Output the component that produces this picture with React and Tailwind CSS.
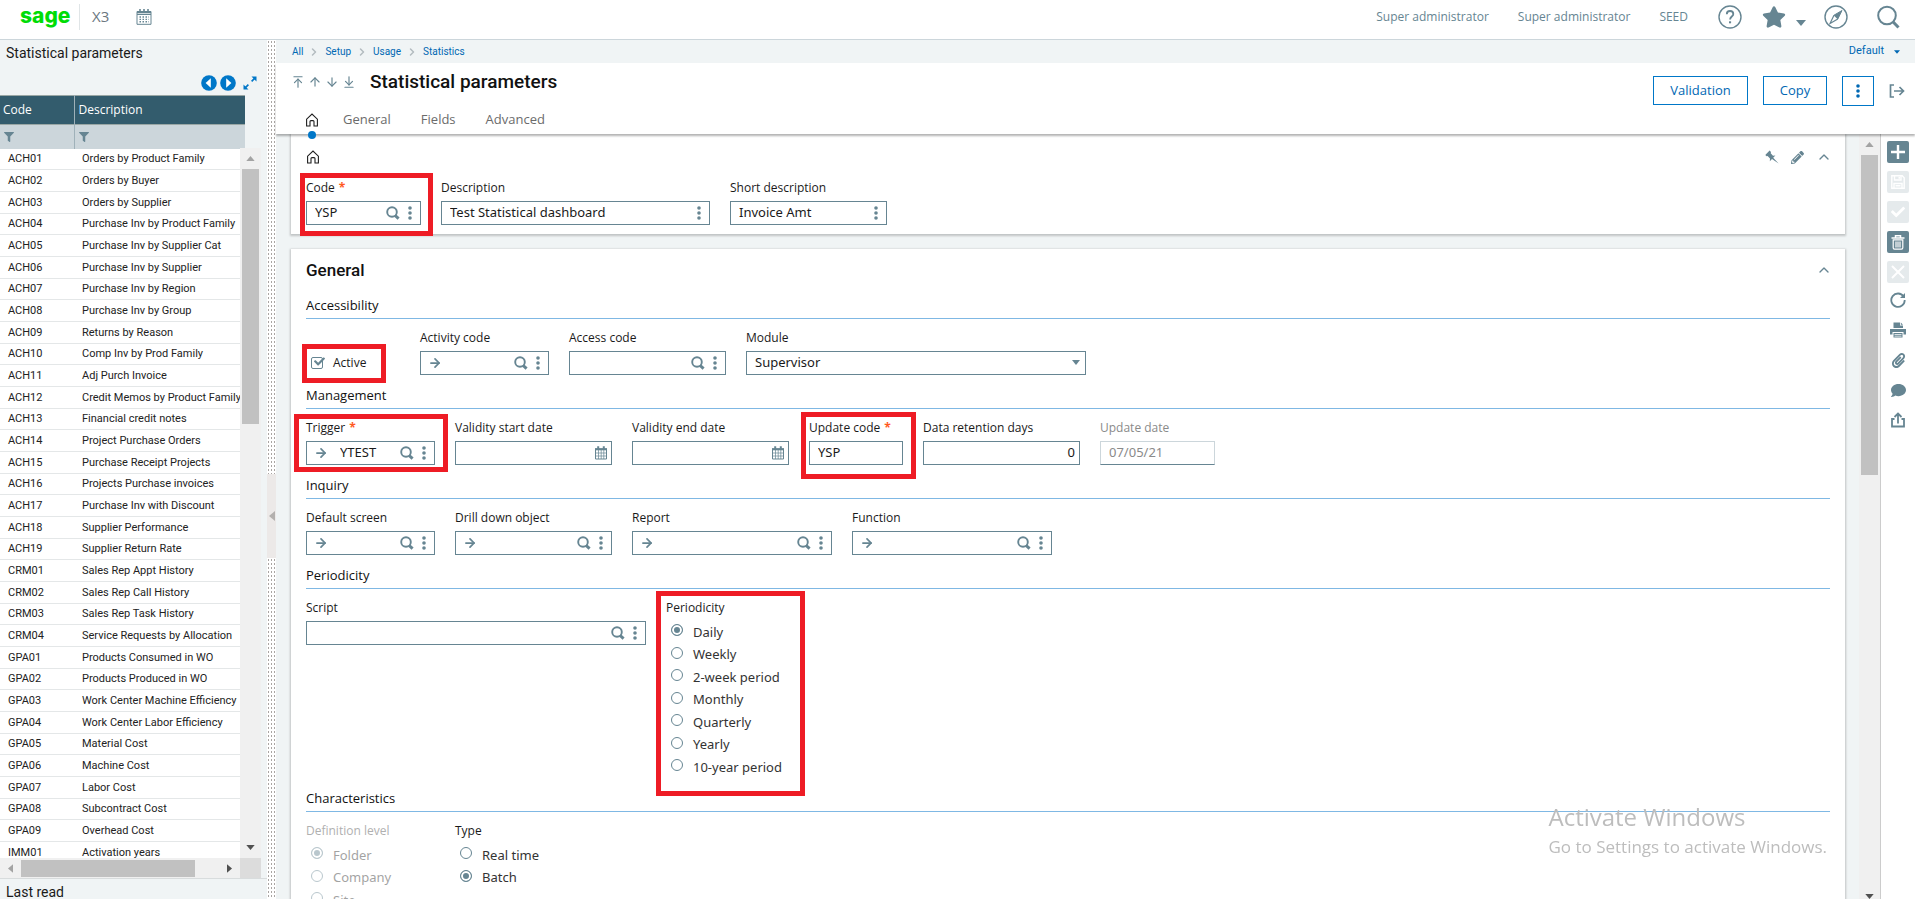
import { useId } from "react";
import { ArrowDown, ArrowDownToLine, ArrowRight, ArrowUp, ArrowUpToLine, ChevronRight, ChevronUp } from "lucide-react";
import { FaCheck, FaComment, FaFilter, FaPaperclip, FaPencilAlt, FaStar } from "react-icons/fa";

const statistics = [
  ["ACH01", "Orders by Product Family"],
  ["ACH02", "Orders by Buyer"],
  ["ACH03", "Orders by Supplier"],
  ["ACH04", "Purchase Inv by Product Family"],
  ["ACH05", "Purchase Inv by Supplier Cat"],
  ["ACH06", "Purchase Inv by Supplier"],
  ["ACH07", "Purchase Inv by Region"],
  ["ACH08", "Purchase Inv by Group"],
  ["ACH09", "Returns by Reason"],
  ["ACH10", "Comp Inv by Prod Family"],
  ["ACH11", "Adj Purch Invoice"],
  ["ACH12", "Credit Memos by Product Family"],
  ["ACH13", "Financial credit notes"],
  ["ACH14", "Project Purchase Orders"],
  ["ACH15", "Purchase Receipt Projects"],
  ["ACH16", "Projects Purchase invoices"],
  ["ACH17", "Purchase Inv with Discount"],
  ["ACH18", "Supplier Performance"],
  ["ACH19", "Supplier Return Rate"],
  ["CRM01", "Sales Rep Appt History"],
  ["CRM02", "Sales Rep Call History"],
  ["CRM03", "Sales Rep Task History"],
  ["CRM04", "Service Requests by Allocation"],
  ["GPA01", "Products Consumed in WO"],
  ["GPA02", "Products Produced in WO"],
  ["GPA03", "Work Center Machine Efficiency"],
  ["GPA04", "Work Center Labor Efficiency"],
  ["GPA05", "Material Cost"],
  ["GPA06", "Machine Cost"],
  ["GPA07", "Labor Cost"],
  ["GPA08", "Subcontract Cost"],
  ["GPA09", "Overhead Cost"],
  ["IMM01", "Activation years"],
];

const periods = ["Daily", "Weekly", "2-week period", "Monthly", "Quarterly", "Yearly", "10-year period"];

/* ---------- icons ---------- */

function SearchIcon() {
  return (
    <svg viewBox="0 0 14 14" className="size-[14px]" fill="none" stroke="currentColor" aria-hidden="true">
      <circle cx="6" cy="6" r="4.8" strokeWidth="1.9" />
      <path d="M9 9.4 12.6 12.6" strokeWidth="3" />
    </svg>
  );
}

function DotsIcon() {
  return (
    <svg viewBox="0 0 4 14" className="h-[14px] w-1" fill="currentColor" aria-hidden="true">
      <circle cx="2" cy="2" r="1.8" />
      <circle cx="2" cy="7" r="1.8" />
      <circle cx="2" cy="12" r="1.8" />
    </svg>
  );
}

function CalendarIcon() {
  return (
    <svg viewBox="0 0 14 14" className="size-[14px]" fill="none" stroke="currentColor" aria-hidden="true">
      <path d="M1.5 3v10h11V3" />
      <path d="M1 3.2h12" strokeWidth="2.2" />
      <path d="M4.2.3v3M9.8.3v3" strokeWidth="2" />
      <path d="M1.5 7h11M1.5 10h11M4.5 4v9M7.2 4v9M9.8 4v9" strokeWidth="0.7" />
    </svg>
  );
}

function AgendaIcon() {
  return (
    <svg viewBox="0 0 16 16" className="size-4" fill="none" stroke="currentColor" aria-hidden="true">
      <path d="M1 2.5h14v12.8H1zM1 5.5h14" />
      <path d="M1 3.5h14" strokeWidth="1.6" />
      <path d="M4 0v3.5M8 0v3.5M12 0v3.5" strokeWidth="1.6" />
      <path d="M3.5 8h9.5M3.5 10.4h9.5M3.5 12.8h9.5" strokeWidth="1.4" strokeDasharray="1.5 1.5" />
    </svg>
  );
}

function HomeIcon() {
  return (
    <svg viewBox="0 0 14 14" className="size-[14px] text-[#1f1f1f]" fill="none" stroke="currentColor" strokeWidth="1.1" aria-hidden="true">
      <path d="M1.6 13V6.2L7 1l5.4 5.2V13H9V8.6c0-.6-.4-1-1-1H6c-.6 0-1 .4-1 1V13z" />
    </svg>
  );
}

function StepIcon({ left }) {
  return (
    <svg viewBox="0 0 16 16" className={left ? "size-4 rotate-180" : "size-4"} aria-hidden="true">
      <circle cx="8" cy="8" r="7.8" fill="#0077c8" />
      <path d="M6.2 3.2v9.6L11.4 8z" fill="#fff" />
    </svg>
  );
}

function ExpandIcon() {
  return (
    <svg viewBox="0 0 14 14" className="size-[14px]" fill="#0077c8" stroke="#0077c8" aria-hidden="true">
      <path d="M8.5.5h5v5zM.5 8.5v5h5z" stroke="none" />
      <path d="m8.6 5.4 3-3M5.4 8.6l-3 3" strokeWidth="1.6" />
    </svg>
  );
}

function PinIcon() {
  return (
    <svg viewBox="0 0 14 14" className="size-[14px]" fill="currentColor" aria-hidden="true">
      <path d="M4.600.6 6 2 5.700 3.200 8 5.800l2.400-.2-2.200 2.200 5.400 5.800L7 9 4.800 11.200 5 8.600 2.600 6 1.600 6.300.3 5z" />
    </svg>
  );
}

function CompassIcon() {
  return (
    <svg viewBox="0 0 24 24" className="size-6" fill="none" stroke="currentColor" aria-hidden="true">
      <circle cx="12" cy="12" r="11" strokeWidth="1.4" />
      <path d="M18 5.5 13.8 14 10 10.2z" fill="currentColor" />
      <path d="m10 10.2-4 8.3 7.8-4.5" strokeWidth="1.2" />
    </svg>
  );
}

function HelpIcon() {
  return (
    <svg viewBox="0 0 24 24" className="size-6" fill="none" stroke="currentColor" aria-hidden="true">
      <circle cx="12" cy="12" r="11" strokeWidth="1.4" />
      <path d="M8.8 9.2C8.8 7.2 10.1 6 12 6s3.3 1.1 3.3 2.9c0 2.6-3.2 2.7-3.2 5.5" strokeWidth="1.8" />
      <path d="M11 16.3h2.1v2H11z" fill="currentColor" stroke="none" />
    </svg>
  );
}

function Triangle({ className }) {
  return (
    <svg viewBox="0 0 10 6" className={className} fill="currentColor" aria-hidden="true">
      <path d="M0 0h10L5 6z" />
    </svg>
  );
}

/* ---------- form controls ---------- */

// red frame drawn over the fields to fill in
function Highlight({ className }) {
  return <div className={`pointer-events-none absolute z-10 border-5 border-[#ee1c25] ${className}`} />;
}

function Label({ htmlFor, required, muted, children }) {
  return (
    <label htmlFor={htmlFor} className={`text-xs whitespace-nowrap ${muted ? "text-[#8a8a8a]" : "text-[#1a1a1a]"}`}>
      {children}
      {required && <span className="ml-1 font-bold text-[#ff5a1f]">*</span>}
    </label>
  );
}

function Field({ label, value = "", width, required, muted, link, search, more, calendar, right, highlight }) {
  const id = useId();
  return (
    <div className={`relative flex shrink-0 flex-col gap-[5px] ${width}`}>
      <Label htmlFor={id} required={required} muted={muted}>{label}</Label>
      <div className={`flex h-6 items-center gap-2 border bg-white px-2 text-[#668592] ${muted ? "border-[#ccd6db] border-b-[#668592]" : "border-[#668592]"}`}>
        {link && (
          <button type="button" aria-label={`Open ${label}`} className="mr-1 -ml-px">
            <ArrowRight size={14} strokeWidth={3} />
          </button>
        )}
        <input
          id={id}
          defaultValue={value}
          disabled={muted}
          className={`w-0 min-w-0 flex-1 bg-transparent font-['Noto_Sans',sans-serif] text-[13px] outline-none ${muted ? "text-[#8a8a8a]" : "text-[#1a1a1a]"} ${right ? "-mr-1 text-right" : ""}`}
        />
        {search && (
          <button type="button" aria-label={`Search ${label}`}>
            <SearchIcon />
          </button>
        )}
        {more && (
          <button type="button" aria-label={`${label} actions`}>
            <DotsIcon />
          </button>
        )}
        {calendar && (
          <button type="button" aria-label={`Pick ${label}`} className="-mr-[5px]">
            <CalendarIcon />
          </button>
        )}
      </div>
      {highlight && <Highlight className={highlight} />}
    </div>
  );
}

function RadioGroup({ label, name, options, selected, width, muted, highlight }) {
  return (
    <fieldset className={`relative shrink-0 ${width}`}>
      <legend className={`block text-xs ${muted ? "text-[#b0b0b0]" : "text-[#1a1a1a]"}`}>{label}</legend>
      <div className={`pt-1 pl-[5px] ${muted ? "opacity-45" : ""}`}>
        {options.map((option) => (
          <label key={option} className="flex h-[23px] items-center gap-[10px] font-['Noto_Sans',sans-serif] text-[13px] text-[#333] even:h-[22px]">
            <input
              type="radio"
              name={name}
              defaultChecked={option === selected}
              disabled={muted}
              className="mb-[3px] size-3 shrink-0 appearance-none rounded-full border border-[#668592] bg-white checked:bg-[#668592] checked:shadow-[inset_0_0_0_2px_#fff]"
            />
            <span className="pt-[2px]">{option}</span>
          </label>
        ))}
      </div>
      {highlight && <Highlight className={highlight} />}
    </fieldset>
  );
}

function Section({ title, children }) {
  return (
    <section>
      <h3 className="border-b border-[#7fb8e4] pt-[10px] pb-[3px] text-[13px] leading-5 font-medium text-[#111]">{title}</h3>
      <div className="flex gap-5 pt-[11px]">{children}</div>
    </section>
  );
}

/* ---------- page parts ---------- */

function TopBar() {
  return (
    <header className="flex h-10 shrink-0 items-center border-b border-[#ccd6db] bg-white pr-[15px] pb-[6px] pl-5 text-[#668592]">
      <a href="#home" className="w-[60px] border-r border-[#e0e5e7] pb-[2px] font-['Inter',sans-serif] text-[21px] leading-6 font-extrabold text-[#00dc06]">sage</a>
      <span className="ml-3 text-[15px] text-[#6b7780]">X3</span>
      <button type="button" aria-label="Calendar" className="ml-[27px]"><AgendaIcon /></button>
      <div className="ml-auto flex items-center gap-[29px] text-xs">
        <span>Super administrator</span>
        <span>Super administrator</span>
        <span>SEED</span>
      </div>
      <button type="button" aria-label="Help" className="ml-[30px]"><HelpIcon /></button>
      <button type="button" aria-label="Favorites" className="ml-5 flex items-center gap-[10px]">
        <FaStar size={24} />
        <Triangle className="mt-3 h-[6px] w-[10px]" />
      </button>
      <button type="button" aria-label="Navigation" className="ml-[18px]"><CompassIcon /></button>
      <button type="button" aria-label="Search" className="ml-7">
        <svg viewBox="0 0 24 24" className="size-6" fill="none" stroke="currentColor" aria-hidden="true">
          <circle cx="11" cy="10.5" r="8.8" strokeWidth="2" />
          <path d="m17.2 17 5.3 5.5" strokeWidth="3" />
        </svg>
      </button>
    </header>
  );
}

function SelectionPanel() {
  return (
    <aside className="flex w-[267px] shrink-0 flex-col bg-[#f0f4f5] font-['Roboto',sans-serif]">
      <h2 className="px-[6px] text-sm leading-[27px] text-[#1a1a1a]">Statistical parameters</h2>
      <div className="flex h-7 items-center justify-end gap-[3px] pt-1 pr-[10px]">
        <button type="button" aria-label="Previous page"><StepIcon left /></button>
        <button type="button" aria-label="Next page"><StepIcon /></button>
        <button type="button" aria-label="Expand" className="ml-1"><ExpandIcon /></button>
      </div>

      <div className="relative min-h-0 w-[261px] flex-1 overflow-hidden">
        <table className="w-[245px] table-fixed border-collapse text-[11px] text-[#222]">
          <thead className="font-['Open_Sans',sans-serif]">
            <tr className="h-[29px] border-t border-b border-[#9aa7a5] bg-[#335c6d] text-left text-xs text-white">
              <th scope="col" className="w-[74px] border-r border-[#9fb1b9] pl-[3px] font-normal">Code</th>
              <th scope="col" className="pl-1 font-normal">Description</th>
            </tr>
            <tr className="h-6 bg-[#ccd6db] text-[#668592]">
              <td className="border-r border-[#9fb1b9] pl-1"><FaFilter size={10} aria-label="Filter code" /></td>
              <td className="pl-1"><FaFilter size={10} aria-label="Filter description" /></td>
            </tr>
          </thead>
          <tbody>
            {statistics.map(([code, description]) => (
              <tr key={code} className="h-[22px] border-b border-[#e4e7e8] bg-white leading-4 nth-[3n+1]:h-[21px]">
                <td className="p-0 pl-2">{code}</td>
                <td className="p-0 pl-2 whitespace-nowrap">{description}</td>
              </tr>
            ))}
          </tbody>
        </table>
        <div className="absolute top-[53px] right-0 bottom-0 flex w-[21px] flex-col items-center bg-[#f0f0f0] py-2">
          <Triangle className="h-[5px] w-[9px] rotate-180 text-[#a3a3a3]" />
          <div className="mt-2 h-[255px] w-[17px] bg-[#c1c1c1]" />
          <Triangle className="mt-auto h-[5px] w-[9px] text-[#505050]" />
        </div>
      </div>

      <div className="flex h-5 w-[261px] shrink-0 bg-[#dcdcdc]">
        <div className="flex w-[240px] items-center bg-[#f0f0f0] px-[6px]">
          <Triangle className="h-[5px] w-[9px] rotate-90 text-[#a3a3a3]" />
          <div className="ml-[6px] h-[17px] w-[174px] bg-[#c1c1c1]" />
          <Triangle className="ml-auto h-[5px] w-[9px] -rotate-90 text-[#505050]" />
        </div>
      </div>
      <h2 className="h-[21px] shrink-0 overflow-hidden border-t border-[#d8dcdd] px-[6px] text-sm leading-[26px] text-[#1a1a1a]">Last read</h2>
    </aside>
  );
}

function Splitter() {
  return (
    <div className="flex w-[9px] shrink-0 flex-col bg-white">
      <div className="flex-14 bg-[radial-gradient(#a9a5a3_1px,transparent_1px)] bg-size-[3px_4px]" />
      <button type="button" aria-label="Collapse panel" className="flex h-[84px] items-center justify-center bg-[#ece9e8]">
        <Triangle className="h-[6px] w-[10px] shrink-0 rotate-90 text-[#b3b0ae]" />
      </button>
      <div className="flex-11 bg-[radial-gradient(#a9a5a3_1px,transparent_1px)] bg-size-[3px_4px]" />
    </div>
  );
}

function PageHeader() {
  return (
    <>
      <div className="flex h-[23px] shrink-0 items-center justify-between bg-[#f0f4f5] pr-[15px] pl-4 font-['Roboto',sans-serif] text-[#0068b3]">
        <nav aria-label="Breadcrumb" className="flex items-center gap-[5px] text-[10px]">
          <a href="#all">All</a>
          <ChevronRight size={12} strokeWidth={3} className="text-[#b3bcc0]" />
          <a href="#setup">Setup</a>
          <ChevronRight size={12} strokeWidth={3} className="text-[#b3bcc0]" />
          <a href="#usage">Usage</a>
          <ChevronRight size={12} strokeWidth={3} className="text-[#b3bcc0]" />
          <a href="#statistics">Statistics</a>
        </nav>
        <button type="button" className="flex items-center gap-[10px] text-[11px]">
          Default
          <Triangle className="h-1 w-[6px]" />
        </button>
      </div>

      <div className="relative z-20 flex h-[71px] shrink-0 justify-between bg-white pr-[10px] pl-[15px] shadow-[0_2px_2px_0_rgba(0,0,0,0.3)]">
        <div>
          <div className="flex h-[41px] items-center pb-[3px] text-[#668592]">
            <div className="flex gap-[3px]">
              <button type="button" aria-label="First record"><ArrowUpToLine size={14} strokeWidth={2} /></button>
              <button type="button" aria-label="Previous record"><ArrowUp size={14} strokeWidth={2} /></button>
              <button type="button" aria-label="Next record"><ArrowDown size={14} strokeWidth={2} /></button>
              <button type="button" aria-label="Last record"><ArrowDownToLine size={14} strokeWidth={2} /></button>
            </div>
            <h1 className="ml-[14px] font-['Roboto',sans-serif] text-[19px] leading-6 font-medium text-[#111]">Statistical parameters</h1>
          </div>
          <nav aria-label="Sections" className="flex h-[30px] items-center gap-[30px] pt-[2px] pl-[14px] text-[13px] text-[#6b6b6b]">
            <a href="#top" aria-label="Home" className="relative -mr-[6px] flex h-full items-center">
              <HomeIcon />
              <span className="absolute -bottom-[5px] left-[3px] size-2 rounded-full bg-[#0077c8]" />
            </a>
            <a href="#general">General</a>
            <a href="#fields">Fields</a>
            <a href="#advanced">Advanced</a>
          </nav>
        </div>

        <div className="flex h-[29px] gap-[15px] pt-[13px] text-[13px] font-medium text-[#0068b3]">
          <button type="button" className="h-[29px] w-[95px] border border-[#0077c8]">Validation</button>
          <button type="button" className="h-[29px] w-16 border border-[#0077c8]">Copy</button>
          <button type="button" aria-label="More actions" className="flex h-[30px] w-8 items-center justify-center border border-[#0077c8]">
            <DotsIcon />
          </button>
          <button type="button" aria-label="Exit" className="h-[30px] text-[#668592]">
            <svg viewBox="0 0 16 14" className="h-[14px] w-4" fill="none" stroke="currentColor" strokeWidth="1.7" aria-hidden="true">
              <path d="M5 1H1.5v12H5M5 7h9.5M10.5 3l4 4-4 4" />
            </svg>
          </button>
        </div>
      </div>
    </>
  );
}

const cardShadow = "shadow-[0_1px_2px_1px_rgba(0,0,0,0.2)]";

function IdentityCard() {
  return (
    <section className={`bg-white px-[15px] pb-[9px] ${cardShadow}`}>
      <div className="flex h-[46px] items-center justify-between text-[#668592]">
        <HomeIcon />
        <div className="-mr-[2px] flex items-center gap-3">
          <button type="button" aria-label="Pin"><PinIcon /></button>
          <button type="button" aria-label="Edit"><FaPencilAlt size={13} /></button>
          <button type="button" aria-label="Collapse"><ChevronUp size={16} strokeWidth={2} /></button>
        </div>
      </div>
      <div className="flex gap-5">
        <Field label="Code" value="YSP" width="w-[115px]" required search more highlight="-top-[7px] -right-[12px] -bottom-[11px] -left-[6px]" />
        <Field label="Description" value="Test Statistical dashboard" width="w-[269px]" more />
        <Field label="Short description" value="Invoice Amt" width="w-[157px]" more />
      </div>
    </section>
  );
}

function GeneralCard() {
  return (
    <section id="general" className={`flex-1 bg-white px-[15px] ${cardShadow}`}>
      <div className="flex h-9 items-center justify-between pt-[6px]">
        <h2 className="font-['Roboto',sans-serif] text-[17px] leading-6 font-medium text-[#111]">General</h2>
        <button type="button" aria-label="Collapse" className="-mr-[2px] text-[#668592]"><ChevronUp size={16} strokeWidth={2} /></button>
      </div>

      <Section title="Accessibility">
        <div className="relative flex w-[94px] shrink-0 items-end">
          <label className="flex h-6 items-center gap-[10px] pl-[5px] text-xs text-[#1a1a1a]">
            <span className="relative flex">
              <input type="checkbox" defaultChecked className="size-3 appearance-none rounded-xs border border-[#668592]" />
              <FaCheck size={11} className="pointer-events-none absolute -top-px left-[3px] text-[#668592]" />
            </span>
            Active
          </label>
          <Highlight className="right-[14px] -bottom-2 -left-1 h-[39px]" />
        </div>
        <Field label="Activity code" width="w-[129px]" link search more />
        <Field label="Access code" width="w-[157px]" search more />
        <div className="relative flex w-[340px] shrink-0 flex-col gap-[5px]">
          <Label htmlFor="module">Module</Label>
          <div className="relative">
            <select id="module" className="block h-6 w-full appearance-none border border-[#668592] bg-white px-2 font-['Noto_Sans',sans-serif] text-[13px] text-[#1a1a1a]">
              <option>Supervisor</option>
            </select>
            <Triangle className="pointer-events-none absolute top-[9px] right-[6px] h-[5px] w-2 text-[#668592]" />
          </div>
        </div>
      </Section>

      <Section title="Management">
        <Field label="Trigger" value="YTEST" width="w-[129px]" required link search more highlight="-top-[6px] -right-[13px] -bottom-[7px] -left-[12px]" />
        <Field label="Validity start date" width="w-[157px]" calendar />
        <Field label="Validity end date" width="w-[157px]" calendar />
        <Field label="Update code" value="YSP" width="w-[94px]" required highlight="-top-2 -right-[13px] -bottom-[14px] -left-2" />
        <Field label="Data retention days" value="0" width="w-[157px]" right />
        <Field label="Update date" value="07/05/21" width="w-[115px]" muted />
      </Section>

      <Section title="Inquiry">
        <Field label="Default screen" width="w-[129px]" link search more />
        <Field label="Drill down object" width="w-[157px]" link search more />
        <Field label="Report" width="w-[200px]" link search more />
        <Field label="Function" width="w-[200px]" link search more />
      </Section>

      <Section title="Periodicity">
        <Field label="Script" width="w-[340px]" search more />
        <RadioGroup label="Periodicity" name="periodicity" options={periods} selected="Daily" width="w-[126px]" highlight="-top-[25px] -right-[13px] -bottom-[18px] -left-[10px]" />
      </Section>

      <Section title="Characteristics">
        <RadioGroup label="Definition level" name="level" options={["Folder", "Company", "Site"]} selected="Folder" width="w-[129px]" muted />
        <RadioGroup label="Type" name="type" options={["Real time", "Batch"]} selected="Batch" width="w-[157px]" />
      </Section>
    </section>
  );
}

function ActionBar() {
  const solid = "flex size-[22px] items-center justify-center rounded-xs bg-[#668592] text-white";
  const faded = "flex size-[22px] items-center justify-center rounded-xs bg-[#e5eaec] text-white";
  const plain = "flex h-[22px] items-center justify-center text-[#668592]";
  return (
    <div className="flex w-[35px] shrink-0 flex-col items-center gap-[6px] border-l border-[#ccc] bg-white pt-[7px]">
      <div className="flex flex-col gap-2">
        <button type="button" aria-label="New" className={solid}>
          <svg viewBox="0 0 14 14" className="size-[14px]" stroke="currentColor" strokeWidth="2.4" aria-hidden="true"><path d="M7 0v14M0 7h14" /></svg>
        </button>
        <button type="button" aria-label="Save" className={faded} disabled>
          <svg viewBox="0 0 14 14" className="size-[14px]" fill="none" stroke="currentColor" strokeWidth="1.4" aria-hidden="true">
            <path d="M.8.8h10.400l2 2v10.400H.8zM3.500 1v4h6.500V1M3 13V8.500h8V13M4.500 10.800h5" />
            <path d="M7.500 1.800h1.500v2H7.500z" fill="currentColor" stroke="none" />
          </svg>
        </button>
        <button type="button" aria-label="Validate" className={faded} disabled><FaCheck size={14} /></button>
        <button type="button" aria-label="Delete" className={solid}>
          <svg viewBox="0 0 14 15" className="h-[15px] w-[14px]" fill="none" stroke="currentColor" aria-hidden="true">
            <path d="M.5 3h13M4.500 2.500V.8h5v1.700" strokeWidth="1.500" />
            <path d="M2.200 4.800h9.600v8c0 .8-.5 1.400-1.300 1.400h-7c-.8 0-1.300-.6-1.300-1.400zM5 6.500v6M7 6.500v6M9 6.500v6" strokeWidth="1.200" />
          </svg>
        </button>
        <button type="button" aria-label="Cancel" className={faded} disabled>
          <svg viewBox="0 0 14 14" className="size-[14px]" stroke="currentColor" strokeWidth="2" aria-hidden="true"><path d="m1 1 12 12M13 1 1 13" /></svg>
        </button>
      </div>
      <div className="flex flex-col gap-2">
        <button type="button" aria-label="Refresh" className={plain}>
          <svg viewBox="0 0 16 16" className="size-4" fill="none" stroke="currentColor" strokeWidth="1.8" aria-hidden="true">
            <path d="M13.600 4.500A6.700 6.700 0 1 0 14.700 8" />
            <path d="M15 1v5h-5z" fill="currentColor" stroke="none" />
          </svg>
        </button>
        <button type="button" aria-label="Print" className={plain}>
          <svg viewBox="0 0 16 16" className="size-4" fill="currentColor" aria-hidden="true">
            <path d="M3.500.5h6.500v3h3v2.500h-9.500z" />
            <path d="m10.800.5 2.200 2.200h-2.200z" />
            <path d="M0 7h16v5.500h-2.500v-2.500h-11v2.500H0z" />
            <path d="M3.500 11h9v4.500h-9zm1 1v.8h7V12zm0 1.700v.8h7v-.8z" fillRule="evenodd" />
          </svg>
        </button>
        <button type="button" aria-label="Attachments" className={plain}><FaPaperclip size={15} /></button>
        <button type="button" aria-label="Comments" className={plain}><FaComment size={15} /></button>
        <button type="button" aria-label="Share" className={plain}>
          <svg viewBox="0 0 16 16" className="size-4" fill="none" stroke="currentColor" strokeWidth="1.8" aria-hidden="true">
            <path d="M4.500 7H2v7.500h12V7h-2.500M8 11.500V2M4.500 5 8 1.500 11.500 5" />
          </svg>
        </button>
      </div>
    </div>
  );
}

export default function App() {
  return (
    <div className="flex h-screen flex-col overflow-hidden bg-white font-['Open_Sans',sans-serif] [&_button]:cursor-pointer">
      <TopBar />
      <div className="flex min-h-0 flex-1">
        <SelectionPanel />
        <Splitter />
        <main className="flex min-w-0 flex-1 flex-col">
          <PageHeader />
          <div className="flex min-h-0 flex-1">
            <div className="flex min-w-0 flex-1 flex-col gap-[15px] overflow-hidden bg-[#f0f4f5] pr-[14px] pl-[15px]">
              <IdentityCard />
              <GeneralCard />
            </div>
            <div className="flex w-[21px] shrink-0 flex-col items-center bg-[#f0f0f0] pt-2">
              <Triangle className="h-[5px] w-[9px] shrink-0 rotate-180 text-[#a3a3a3]" />
              <div className="mt-2 h-[320px] w-[17px] shrink-0 bg-[#c1c1c1]" />
              <Triangle className="mt-auto h-[5px] w-[9px] shrink-0 text-[#505050]" />
            </div>
            <ActionBar />
          </div>
        </main>
      </div>

      {/* system watermark */}
      <div className="pointer-events-none fixed right-[88px] bottom-[38px] z-30 text-[#bdbdbd]">
        <p className="text-2xl">Activate Windows</p>
        <p className="text-[17px] leading-7">Go to Settings to activate Windows.</p>
      </div>
    </div>
  );
}
